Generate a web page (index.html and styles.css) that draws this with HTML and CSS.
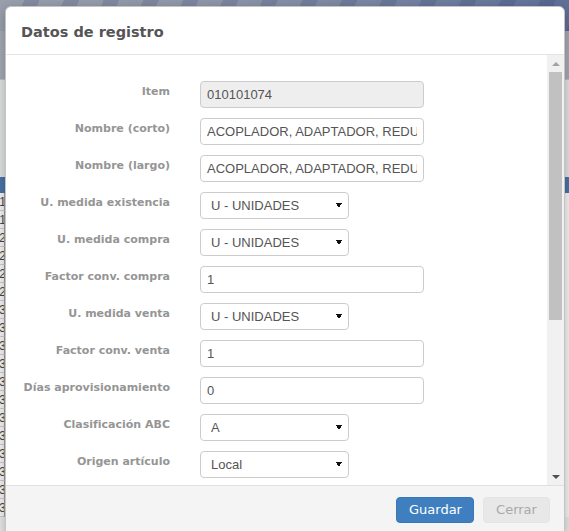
FILE: index.html
```html
<!DOCTYPE html>
<html lang="es">
<head>
<meta charset="utf-8">
<title>Datos de registro</title>
<link rel="stylesheet" href="styles.css">
</head>
<body>
<div class="app">
  <div class="app-top"></div>
  <div class="app-gap"></div>
  <div class="grid">
    <div class="grid-head"></div>
    <div class="grid-row"><span class="cell-end">1</span></div>
    <div class="grid-row"><span class="cell-end">1</span></div>
    <div class="grid-row"><span class="cell-end">2</span></div>
    <div class="grid-row"><span class="cell-end">2</span></div>
    <div class="grid-row"><span class="cell-end">2</span></div>
    <div class="grid-row"><span class="cell-end">2</span></div>
    <div class="grid-row"><span class="cell-end">3</span></div>
    <div class="grid-row"><span class="cell-end">3</span></div>
    <div class="grid-row"><span class="cell-end">3</span></div>
    <div class="grid-row"><span class="cell-end">3</span></div>
    <div class="grid-row"><span class="cell-end">3</span></div>
    <div class="grid-row"><span class="cell-end">3</span></div>
    <div class="grid-row"><span class="cell-end">3</span></div>
    <div class="grid-row"><span class="cell-end">3</span></div>
    <div class="grid-row"><span class="cell-end">3</span></div>
    <div class="grid-row"><span class="cell-end">3</span></div>
    <div class="grid-row"><span class="cell-end">3</span></div>
    <div class="grid-row"><span class="cell-end">3</span></div>
  </div>
</div>

<div class="modal">
  <div class="modal-header">
    <h4 class="modal-title">Datos de registro</h4>
  </div>
  <div class="modal-body">
    <div class="body-view">
      <form class="form">
        <div class="form-row">
          <label class="control-label">Item</label>
          <input class="ctrl" type="text" value="010101074" disabled>
        </div>
        <div class="form-row">
          <label class="control-label">Nombre (corto)</label>
          <input class="ctrl" type="text" value="ACOPLADOR, ADAPTADOR, REDUCTOR">
        </div>
        <div class="form-row">
          <label class="control-label">Nombre (largo)</label>
          <input class="ctrl" type="text" value="ACOPLADOR, ADAPTADOR, REDUCTOR">
        </div>
        <div class="form-row">
          <label class="control-label">U. medida existencia</label>
          <select class="ctrl sel"><option>U - UNIDADES</option></select>
        </div>
        <div class="form-row">
          <label class="control-label">U. medida compra</label>
          <select class="ctrl sel"><option>U - UNIDADES</option></select>
        </div>
        <div class="form-row">
          <label class="control-label">Factor conv. compra</label>
          <input class="ctrl" type="text" value="1">
        </div>
        <div class="form-row">
          <label class="control-label">U. medida venta</label>
          <select class="ctrl sel"><option>U - UNIDADES</option></select>
        </div>
        <div class="form-row">
          <label class="control-label">Factor conv. venta</label>
          <input class="ctrl" type="text" value="1">
        </div>
        <div class="form-row">
          <label class="control-label">Días aprovisionamiento</label>
          <input class="ctrl" type="text" value="0">
        </div>
        <div class="form-row">
          <label class="control-label">Clasificación ABC</label>
          <select class="ctrl sel"><option>A</option></select>
        </div>
        <div class="form-row">
          <label class="control-label">Origen artículo</label>
          <select class="ctrl sel"><option>Local</option></select>
        </div>
      </form>
    </div>
    <div class="scrollbar" aria-hidden="true">
      <div class="sb-btn"><span class="arrow-up"></span></div>
      <div class="sb-track"><div class="sb-thumb"></div></div>
      <div class="sb-btn"><span class="arrow-down"></span></div>
    </div>
  </div>
  <div class="modal-footer">
    <button class="btn btn-primary" type="button">Guardar</button>
    <button class="btn btn-default" type="button" disabled>Cerrar</button>
  </div>
</div>
</body>
</html>
```

FILE: styles.css
```css
html, body {
  margin: 0;
  padding: 0;
  height: 100%;
  overflow: hidden;
}

body {
  background: #e6e6e6;
  font-family: "DejaVu Sans", Verdana, sans-serif;
}

/* ---------- page behind the modal ---------- */
.app {
  display: flex;
  flex-direction: column;
}

.app-top {
  height: 79px;
  background:
    repeating-linear-gradient(115deg, rgba(255,255,255,0) 0 22px, rgba(40,60,110,0.18) 22px 36px),
    linear-gradient(to right, #9aa0ac 0%, #8d96aa 40%, #5f7099 100%);
  border-bottom: 1px solid #b8bcc4;
  box-shadow: inset 0 -48px 0 #a3a8b2;
}

.app-gap {
  height: 97px;
  background: #dfe0e2;
}

.grid {
  display: flex;
  flex-direction: column;
  background: #f2f2f2;
}

.grid-head {
  height: 16px;
  background: #4874a6;
}

.grid-row {
  height: 17px;
  border-bottom: 1px solid #c9c9c9;
  display: flex;
  align-items: center;
  justify-content: flex-end;
  width: 4px;
  overflow: hidden;
  border-right: 1px solid #9a9a9a;
  font-family: "Liberation Sans", Arial, sans-serif;
  font-size: 12px;
  color: #444;
}

.cell-end {
  margin-right: -2px;
}

/* ---------- modal ---------- */
.modal {
  position: absolute;
  top: 6px;
  left: 5px;
  width: 558px;
  background: #fff;
  border: 1px solid #c4c4c4;
  border-radius: 6px;
  box-shadow: 0 3px 12px rgba(0, 0, 0, 0.25);
  overflow: hidden;
  display: flex;
  flex-direction: column;
}

.modal-header {
  height: 47px;
  padding: 0 15px;
  border-bottom: 1px solid #e5e5e5;
  display: flex;
  align-items: center;
}

.modal-title {
  margin: 0;
  font-size: 14.5px;
  font-weight: bold;
  color: #555;
  line-height: 18px;
  padding-top: 2px;
}

.modal-body {
  height: 430px;
  display: flex;
}

.body-view {
  flex: 1;
  overflow: hidden;
}

/* drawn scrollbar (the capture hides native ones) */
.scrollbar {
  width: 17px;
  background: #f1f1f1;
  display: flex;
  flex-direction: column;
}

.sb-btn {
  height: 17px;
  display: flex;
  align-items: center;
  justify-content: center;
}

.arrow-up {
  width: 0;
  height: 0;
  border-left: 4px solid transparent;
  border-right: 4px solid transparent;
  border-bottom: 4px solid #a3a3a3;
}

.arrow-down {
  width: 0;
  height: 0;
  border-left: 4px solid transparent;
  border-right: 4px solid transparent;
  border-top: 4px solid #505050;
}

.sb-track {
  flex: 1;
  padding: 0 2px;
}

.sb-thumb {
  height: 248px;
  background: #c1c1c1;
}

.form {
  padding-top: 26px;
  display: flex;
  flex-direction: column;
  gap: 10px;
}

.form-row {
  display: grid;
  grid-template-columns: 164px auto;
  column-gap: 30px;
  align-items: start;
  justify-items: start;
}

.control-label {
  justify-self: end;
  text-align: right;
  font-size: 11px;
  font-weight: bold;
  line-height: 15px;
  padding-top: 3px;
  color: #959595;
  white-space: nowrap;
}

.ctrl {
  box-sizing: border-box;
  width: 224px;
  height: 27px;
  margin: 0;
  padding: 0 6px;
  border: 1px solid #ccc;
  border-radius: 4px;
  background: #fff;
  font-family: "Liberation Sans", Arial, sans-serif;
  font-size: 13px;
  color: #555;
  outline: none;
}

.ctrl:disabled {
  background: #eee;
  color: #555;
  -webkit-text-fill-color: #555;
  opacity: 1;
}

.sel {
  width: 149px;
  padding: 0 20px 0 10px;
  -webkit-appearance: none;
  appearance: none;
  background-image:
    linear-gradient(to top right, transparent 50%, #111 50%),
    linear-gradient(to top left, transparent 50%, #111 50%);
  background-size: 3px 5px, 3px 5px;
  background-position: right 9px center, right 6px center;
  background-repeat: no-repeat;
}

.modal-footer {
  padding: 11px 14px 11px 15px;
  background: #f4f4f4;
  border-top: 1px solid #e0e0e0;
  display: flex;
  justify-content: flex-end;
  gap: 9px;
}

.btn {
  height: 26px;
  padding: 0 12px;
  border: 1px solid transparent;
  border-radius: 4px;
  font-family: "DejaVu Sans", Verdana, sans-serif;
  font-size: 13px;
  line-height: 24px;
}

.btn-primary {
  background: #3f7fc0;
  border-color: #3a77b6;
  color: #fff;
  width: 78px;
}

.btn-default {
  background: #e8e8e8;
  border-color: #e4e4e4;
  color: #a9a9a9;
  width: 67px;
}
```
